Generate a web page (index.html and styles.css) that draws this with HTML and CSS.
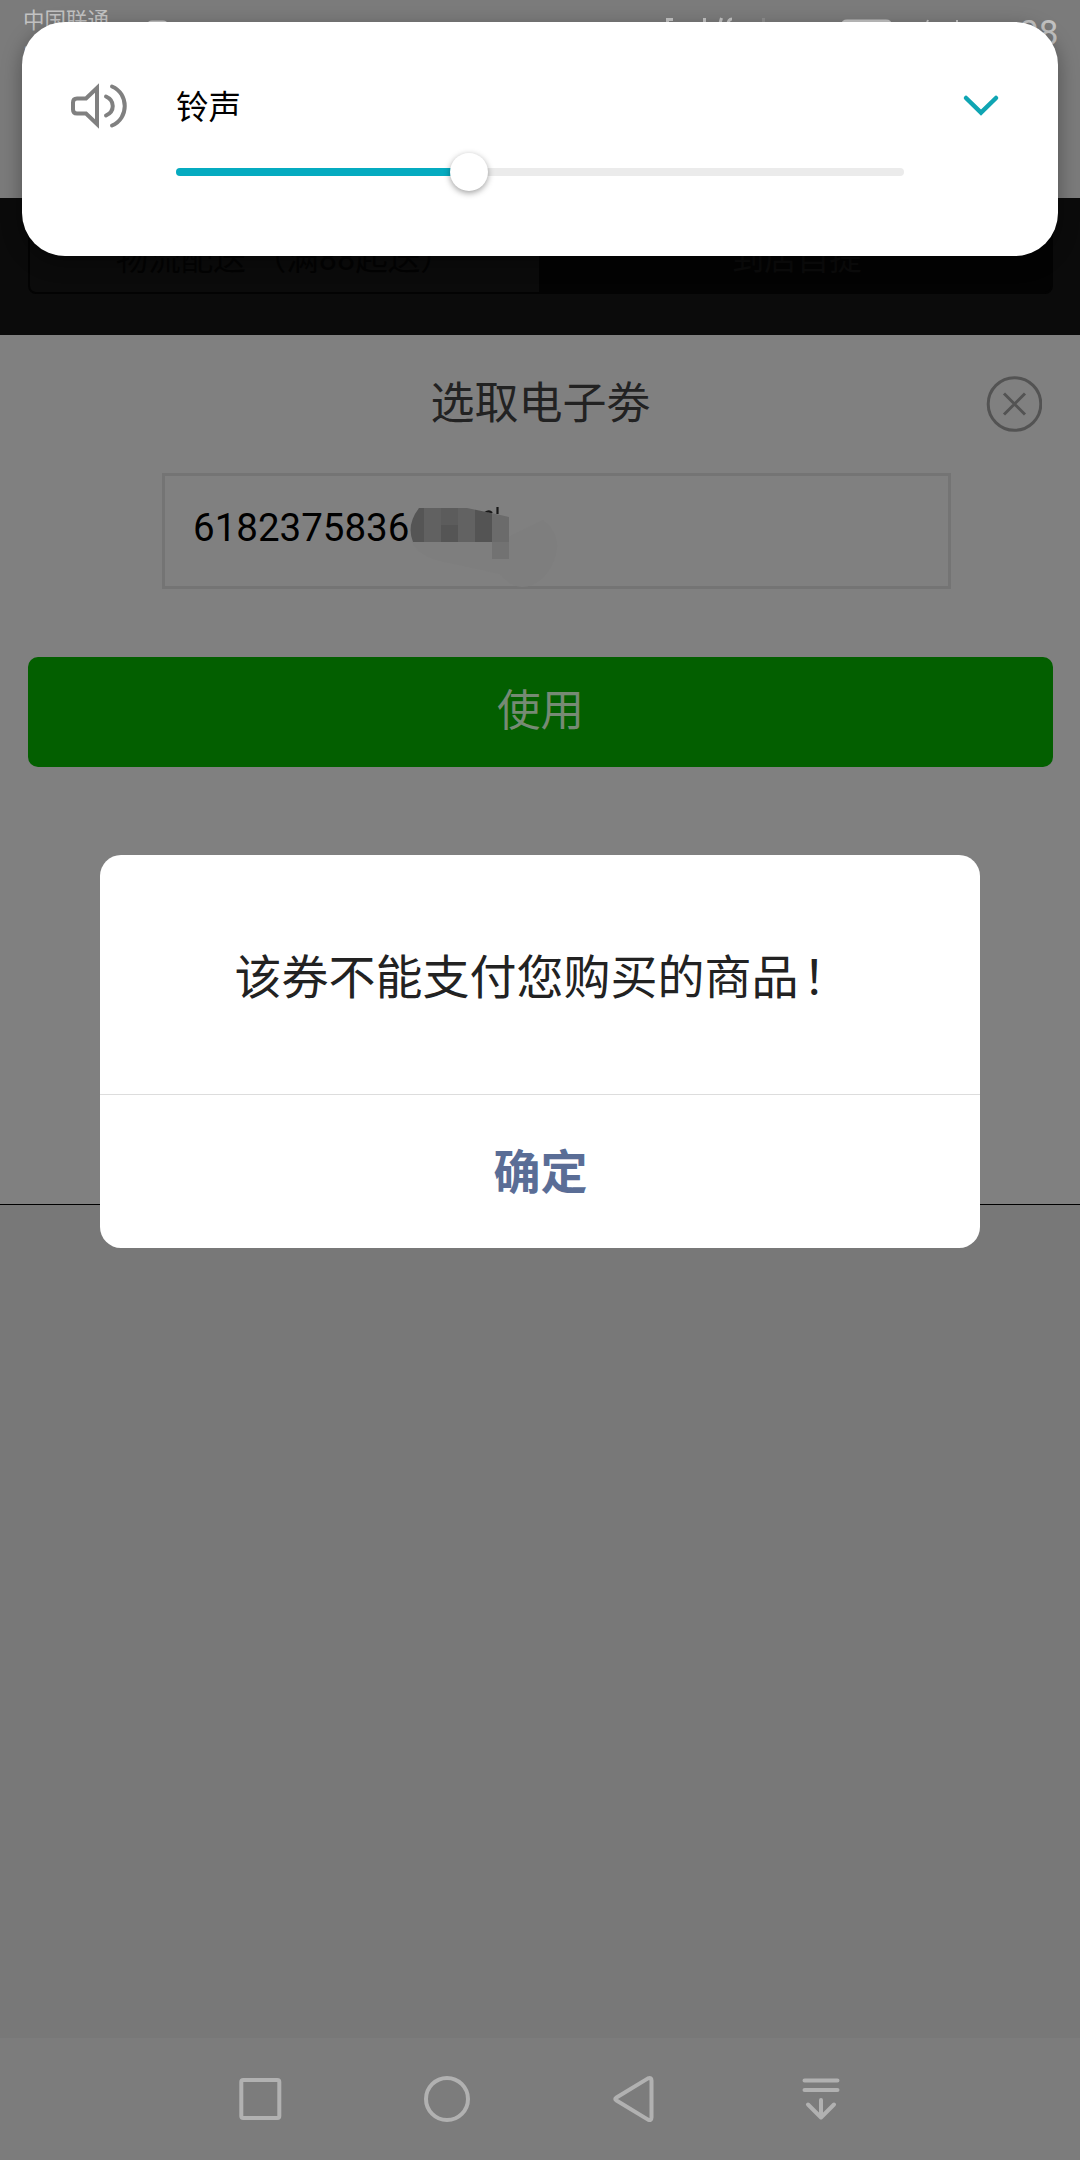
FILE: index.html
```html
<!DOCTYPE html>
<html lang="zh-CN">
<head>
<meta charset="utf-8">
<title>选取电子劵</title>
<link rel="stylesheet" href="styles.css">
</head>
<body>
<div class="screen">
  <header class="status">
    <div class="carriers"><span>中国联通</span><span>中国电信</span></div>
    <svg class="status-icons" width="860" height="40" viewBox="140 0 860 40" fill="none" stroke="#c3c3c3" stroke-width="3">
      <path d="M149 26v-2q0-2 3-2h11q3 0 3 2v2"/>
      <path d="M667.500 32V19.500H673M704.500 18v14M721.500 18l-4 14M728 25q0-6 4-6"/>
      <path d="M763.500 18v5" stroke="#8d8d8d"/>
      <path d="M843 24q0-3 4-3h39q4 0 4 3"/>
      <path d="M928 20l-4 10M957 20v10" stroke-width="2"/>
    </svg>
    <span class="clock">08</span>
  </header>
  <nav class="tabs">
    <div class="tab">物流配送 （满88起送）</div>
    <div class="tab tab-active">到店自提</div>
  </nav>
  <main class="sheet">
    <div class="sheet-head">
      <h1>选取电子劵</h1>
      <svg class="close" width="56" height="56" viewBox="0 0 56 56" fill="none" stroke="#535353" stroke-width="3"><circle cx="28.500" cy="28" r="26.300"/><path d="M18 17.500l21 21M39 17.500l-21 21"/></svg>
    </div>
    <div class="field">
      <span>6182375836</span>
      <svg class="mask" width="150" height="84" viewBox="0 0 150 84">
        <path d="M76 6q4-3 7 0M88.500 0v7" fill="none" stroke="#181818" stroke-width="2.200"/>
        <path d="M3 35h86l45-22q18 14 13 34c-5 21-20 33-34 33q-12 0-22-13L40 56Q10 51 3 35z" fill="#7e7e7e"/>
        <clipPath id="smear"><path d="M10 1H58L87 7L100 10V52H83V35H4Q-3 18 10 1z"/></clipPath>
        <g clip-path="url(#smear)">
          <path fill="#555" d="M0 0h15v35H0z"/><path fill="#616161" d="M15 0h17v35H15z"/>
          <path fill="#5c5c5c" d="M32 0h17v18H32z"/><path fill="#555" d="M32 18h17v17H32z"/>
          <path fill="#626262" d="M49 0h17v35H49z"/><path fill="#545454" d="M66 0h17v35H66z"/>
          <path fill="#6b6b6b" d="M83 0h17v35H83z"/><path fill="#727272" d="M83 35h17v17H83z"/>
        </g>
      </svg>
    </div>
    <div class="use">使用</div>
  </main>
  <section class="backdrop"></section>
  <footer class="navbar">
    <svg width="48" height="48" viewBox="0 0 48 48"><rect x="5.300" y="5" width="38" height="38" rx="2"/></svg>
    <svg width="48" height="48" viewBox="0 0 48 48"><circle cx="24" cy="24" r="21"/></svg>
    <svg width="48" height="48" viewBox="0 0 48 48"><path d="M6.500 22.500L38 3.400Q41.500 2 41.500 5.500V42.500Q41.500 46 38 44.600L6.500 25.500Q4 24 6.500 22.500z"/></svg>
    <svg width="48" height="48" viewBox="0 0 48 48"><path d="M7.500 5.500h33M7.500 15h33M24 25v17M11 29.500l13 13 13-13"/></svg>
  </footer>

  <div class="volume">
    <svg class="speaker" width="60" height="50" viewBox="68 81 60 50" fill="none" stroke="#808080" stroke-width="4" stroke-linecap="round" stroke-linejoin="miter"><path d="M97 88v36L86 113.500H77Q73 113.500 73 109.500V102.500Q73 98.500 77 98.500H86z"/><path d="M106 96.500c9 4 9 15 0 19M112 86.500c17 7 17 32 0 39"/></svg>
    <div class="volume-main">
      <div class="volume-name">铃声</div>
      <div class="track"><div class="fill"></div><div class="thumb"></div></div>
    </div>
    <svg class="chevron" width="40" height="26" viewBox="0 0 40 26" fill="none" stroke="#0fa5b3" stroke-width="4.500" stroke-linecap="round"><path d="M5 5l15 14.500L35 5"/></svg>
  </div>

  <div class="dialog">
    <p class="message">该券不能支付您购买的商品<span class="mark">！</span></p>
    <div class="confirm">确定</div>
  </div>
</div>
</body>
</html>
```
FILE: styles.css
```css
* { box-sizing: border-box; }
body { margin: 0; }
.screen {
  position: relative;
  display: flex;
  flex-direction: column;
  width: 1080px;
  height: 2160px;
  overflow: hidden;
  background: #808080;
  font-family: Roboto, "Noto Sans CJK SC", sans-serif;
}
.status {
  display: flex;
  height: 198px;
  padding: 0 0 0 23px;
  background: #7b7b7b;
  color: #c3c3c3;
}
.carriers {
  display: flex;
  flex-direction: column;
  width: 88px;
  padding-top: 4px;
  font-size: 21.5px;
  line-height: 33px;
}
.status-icons { flex: none; margin-left: 29px; }
.clock { margin-left: 19px; padding-top: 14px; font-size: 35px; line-height: 40px; }
.tabs {
  display: flex;
  height: 137px;
  padding: 0 27px 41px 28px;
  background: #0b0b0b;
}
.tab {
  display: flex;
  flex: 1;
  justify-content: center;
  padding-top: 35px;
  border: 2px solid #030303;
  border-radius: 0 0 0 8px;
  color: #030303;
  font-size: 32.5px;
  line-height: 48px;
  white-space: pre;
}
.tab-active { background: #030303; color: #0b0b0b; border-radius: 0 0 8px 0; }
.sheet { height: 870px; padding: 41px 27px 0 28px; border-bottom: 1px solid #000; }
.sheet-head {
  display: flex;
  align-items: center;
  justify-content: flex-end;
  height: 56px;
  padding-right: 11px;
}
.sheet-head h1 {
  flex: 1;
  margin: 0;
  padding: 0 0 0 67px;
  color: #222;
  font-size: 44px;
  line-height: 56px;
  font-weight: 400;
  text-align: center;
}
.field {
  display: flex;
  align-items: center;
  width: 789px;
  height: 116px;
  margin: 41px 0 0 134px;
  padding: 0 0 7px 28px;
  border: 3px solid #747474;
  font-size: 38.5px;
  color: #000;
}
.mask { margin: 43px 0 0 0; flex: none; }
.use {
  height: 110px;
  margin-top: 68px;
  border-radius: 10px;
  background: #035f00;
  color: #768a74;
  font-size: 43.5px;
  line-height: 110px;
  text-align: center;
}
.backdrop { height: 833px; background: #787878; }
.navbar {
  display: flex;
  gap: 139px;
  height: 122px;
  padding: 37px 0 0 236px;
  background: #7c7c7c;
}
.navbar svg {
  fill: none;
  stroke: #b1b1b1;
  stroke-width: 4;
  stroke-linecap: round;
  stroke-linejoin: round;
}
.volume {
  position: absolute;
  left: 22px;
  top: 22px;
  display: flex;
  align-items: flex-start;
  width: 1036px;
  height: 234px;
  border-radius: 43px;
  background: #fff;
  box-shadow: 0 6px 20px rgba(0, 0, 0, .35);
}
.speaker { margin: 59px 0 0 46px; }
.volume-main { width: 728px; margin: 62px 0 0 48px; }
.volume-name { font-size: 32.5px; line-height: 48px; color: #000; }
.track {
  display: flex;
  align-items: center;
  height: 8px;
  margin-top: 36px;
  border-radius: 4px;
  background: #ebebeb;
}
.fill { width: 280px; height: 8px; border-radius: 4px 0 0 4px; background: #05abc0; }
.thumb {
  width: 38px;
  height: 38px;
  margin-left: -6px;
  border-radius: 50%;
  background: #fff;
  box-shadow: 0 2px 6px rgba(0, 0, 0, .38);
}
.chevron { margin: 71px 0 0 57px; }
.dialog {
  position: absolute;
  left: 100px;
  top: 855px;
  width: 880px;
  height: 393px;
  border-radius: 21px;
  background: #fff;
  text-align: center;
}
.message {
  height: 240px;
  margin: 0;
  padding-top: 88px;
  border-bottom: 1px solid #ddd;
  color: #222;
  font-size: 47px;
  line-height: 70px;
}
.mark { margin: 0 -4px 0 4px; }
.confirm { padding: 43px 0 0 1px; color: #5a6d96; font-size: 47px; line-height: 70px; font-weight: 700; }
```
